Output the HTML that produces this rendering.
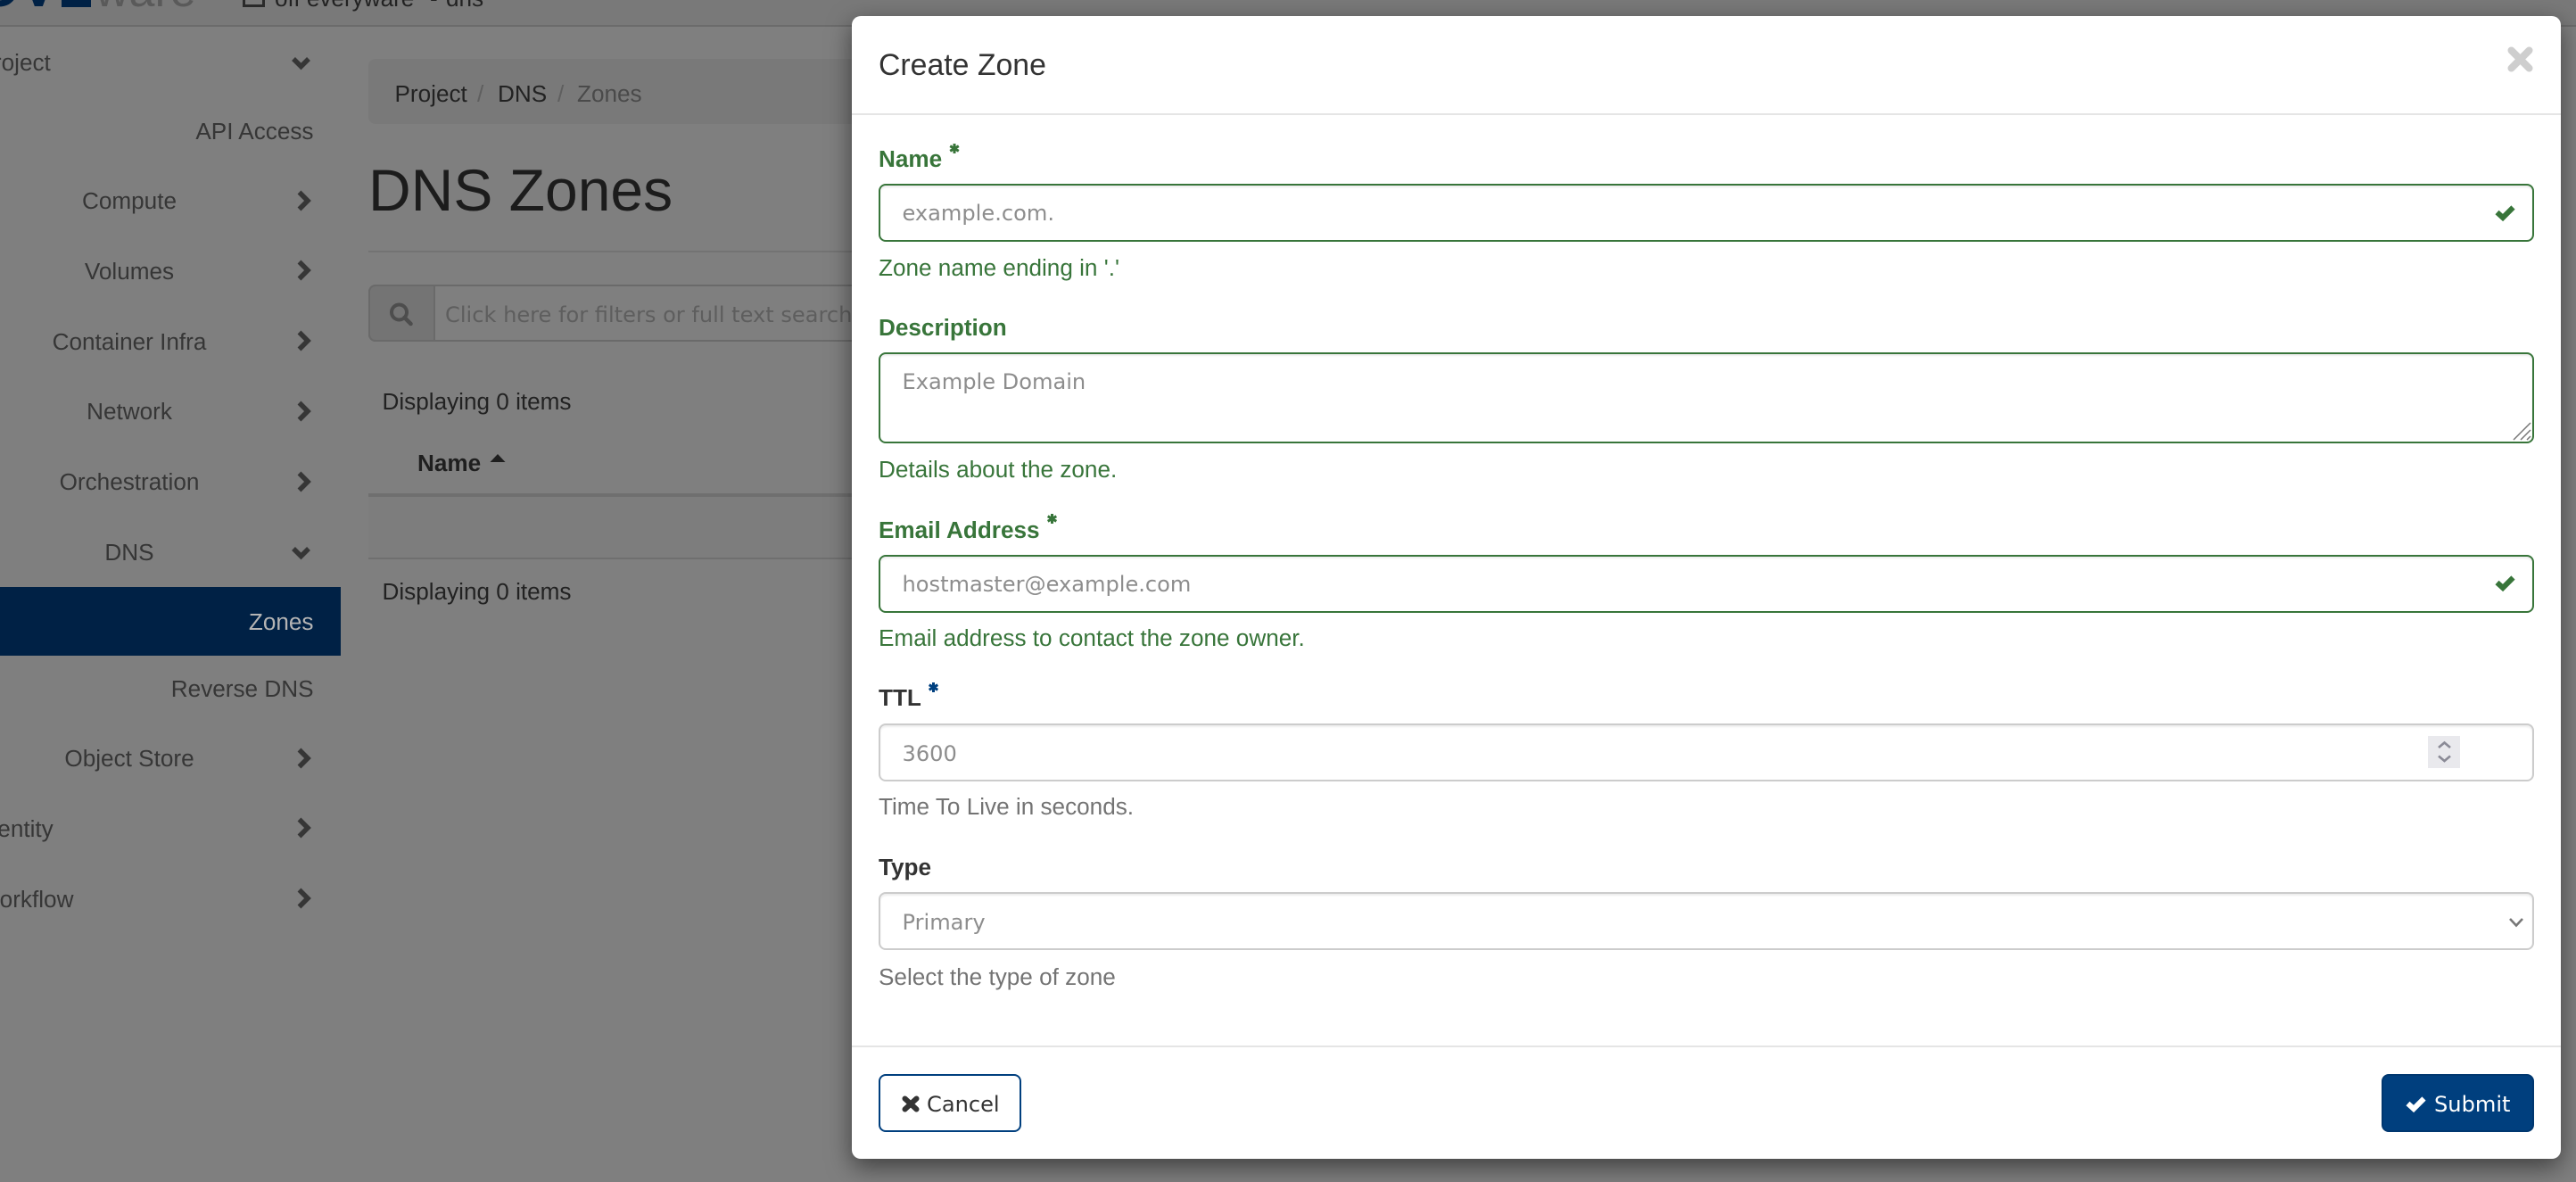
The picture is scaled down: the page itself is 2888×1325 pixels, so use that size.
<!DOCTYPE html>
<html><head><meta charset="utf-8"><title>DNS Zones</title>
<style>
html,body{margin:0;padding:0;width:2888px;height:1325px;overflow:hidden;background:#7f7f7f}
body{position:relative;font-family:"Liberation Sans",sans-serif;font-size:26.13px;color:#333}
.t{position:absolute;white-space:nowrap;line-height:1}
.b{position:absolute;box-sizing:border-box}
.side{color:#363636;transform:translateX(-50%);left:145px}
.sl{color:#363636;left:-24.5px}
.rt{color:#363636;right:2536.5px}
.o{font-family:"DejaVu Sans",sans-serif;font-size:24.1px}
.ph{color:#8d8d8d}
.lb{font-weight:bold}
.g{color:#38753a}
.h{color:#737373}
.in{left:985px;width:1856px;height:65px;border:2px solid #ccc;border-radius:8px;box-shadow:inset 0 2px 2px rgba(0,0,0,.075);background:#fff}
.ok{border-color:#38753a}
#modal{left:955px;top:18px;width:1916px;height:1281px;background:#fff;border-radius:10px;box-shadow:0 9px 27px rgba(0,0,0,.5)}
svg{position:absolute;left:0;top:0;z-index:5}
</style></head><body>

<div class="b" style="left:0;top:0;width:2888px;height:30px;background:#797979;border-bottom:2px solid #6b6b6b"></div>
<div class="t" style="right:2824px;top:-44.5px;font-size:62px;font-weight:bold;color:#002145">NOV</div>
<div class="b" style="left:69px;top:0;width:33px;height:8px;background:#002145"></div>
<div class="t" style="left:107px;top:-36px;font-size:52px;color:#5a5a5a">ware</div>
<div class="b" style="left:272px;top:-10px;width:25px;height:18px;border:3px solid #2a2a2a"></div>
<div class="t" style="left:308px;top:-15px;color:#222">off everyware</div>
<div class="t" style="left:482px;top:-15px;color:#222">-</div>
<div class="t" style="left:500px;top:-15px;color:#222">dns</div>

<div class="t sl" style="top:57px">Project</div>
<div class="t rt" style="top:134px">API Access</div>
<div class="t side" style="top:212px">Compute</div>
<div class="t side" style="top:291px">Volumes</div>
<div class="t side" style="top:370px">Container Infra</div>
<div class="t side" style="top:448px">Network</div>
<div class="t side" style="top:527px">Orchestration</div>
<div class="t side" style="top:606px">DNS</div>
<div class="b" style="left:0;top:658px;width:382px;height:77px;background:#002145"></div>
<div class="t rt" style="top:684px;color:#b4b4b4">Zones</div>
<div class="t rt" style="top:759px">Reverse DNS</div>
<div class="t side" style="top:837px">Object Store</div>
<div class="t sl" style="top:916px">Identity</div>
<div class="t sl" style="top:995px">Workflow</div>

<div class="b" style="left:413px;top:66px;width:560px;height:73px;background:#797979;border-radius:8px"></div>
<div class="t" style="left:442.500px;top:92px;color:#222">Project</div>
<div class="t" style="left:535px;top:92px;color:#5f5f5f">/</div>
<div class="t" style="left:558px;top:92px;color:#222">DNS</div>
<div class="t" style="left:625px;top:92px;color:#5f5f5f">/</div>
<div class="t" style="left:647px;top:92px;color:#4a4a4a">Zones</div>
<div class="t" style="left:413px;top:180px;font-size:66px;color:#1c1c1c">DNS Zones</div>
<div class="b" style="left:413px;top:281px;width:560px;height:2px;background:#737373"></div>

<div class="b" style="left:413px;top:319px;width:560px;height:64px;border:2px solid #6a6a6a;border-radius:8px;background:#7f7f7f"></div>
<div class="b" style="left:413px;top:319px;width:75px;height:64px;border:2px solid #6a6a6a;border-radius:8px 0 0 8px;background:#747474"></div>
<div class="t o" style="left:499px;top:340.500px;color:#5e5e5e">Click here for filters or full text search</div>

<div class="t" style="left:428.500px;top:437px;color:#222">Displaying 0 items</div>
<div class="t lb" style="left:468px;top:506px;color:#1f1f1f">Name</div>
<div class="b" style="left:413px;top:553px;width:560px;height:4px;background:#6f6f6f"></div>
<div class="b" style="left:413px;top:557px;width:560px;height:68px;background:#7d7d7d"></div>
<div class="b" style="left:413px;top:625px;width:560px;height:2px;background:#6f6f6f"></div>
<div class="t" style="left:428.500px;top:650px;color:#222">Displaying 0 items</div>

<div class="b" id="modal"></div>
<div class="t" style="left:985px;top:56.500px;font-size:33.800px;color:#333;z-index:2">Create Zone</div>
<div class="b" style="left:955px;top:127px;width:1916px;height:2px;background:#e5e5e5;z-index:2"></div>

<div style="position:relative;z-index:2">
<div class="t lb g" style="left:985px;top:165px">Name</div>
<div class="b in ok" style="top:206px"></div>
<div class="t o ph" style="left:1011.500px;top:226.500px">example.com.</div>
<div class="t g" style="left:985px;top:287px">Zone name ending in '.'</div>

<div class="t lb g" style="left:985px;top:354px">Description</div>
<div class="b in ok" style="top:395px;height:102px"></div>
<div class="t o ph" style="left:1011.500px;top:416px">Example Domain</div>
<div class="t g" style="left:985px;top:513px">Details about the zone.</div>

<div class="t lb g" style="left:985px;top:581px">Email Address</div>
<div class="b in ok" style="top:622px"></div>
<div class="t o ph" style="left:1011.500px;top:643px">hostmaster@example.com</div>
<div class="t g" style="left:985px;top:702px">Email address to contact the zone owner.</div>

<div class="t lb" style="left:985px;top:769px">TTL</div>
<div class="b in" style="top:811px"></div>
<div class="t o ph" style="left:1011.500px;top:833px">3600</div>
<div class="b" style="left:2722px;top:825px;width:36px;height:36px;background:#e9e9ed"></div>
<div class="t h" style="left:985px;top:891px">Time To Live in seconds.</div>

<div class="t lb" style="left:985px;top:959px">Type</div>
<div class="b in" style="top:1000px"></div>
<div class="t o ph" style="left:1011.500px;top:1022px">Primary</div>
<div class="t h" style="left:985px;top:1082px">Select the type of zone</div>

<div class="b" style="left:955px;top:1172px;width:1916px;height:2px;background:#e5e5e5"></div>
<div class="b" style="left:985px;top:1204px;width:160px;height:65px;border:2px solid #003f7e;border-radius:8px;background:#fff"></div>
<div class="t o" style="left:1039px;top:1225.500px;color:#333">Cancel</div>
<div class="b" style="left:2670px;top:1204px;width:171px;height:65px;border:2px solid #00376f;border-radius:8px;background:#003f7e"></div>
<div class="t o" style="left:2729px;top:1225.500px;color:#fff">Submit</div>
</div>

<svg width="2888" height="1325" viewBox="0 0 2888 1325" fill="none">
  <g stroke="#363636" stroke-width="5.500">
    <path d="M329 66l8.500 8.500 8.500-8.500"/>
    <path d="M329 615l8.500 8.500 8.500-8.500"/>
    <path d="M335.500 215.500l9.500 9.500-9.500 9.500"/>
    <path d="M335.500 293.500l9.500 9.500-9.500 9.500"/>
    <path d="M335.500 372.500l9.500 9.500-9.500 9.500"/>
    <path d="M335.500 451.500l9.500 9.500-9.500 9.500"/>
    <path d="M335.500 530.500l9.500 9.500-9.500 9.500"/>
    <path d="M335.500 840.500l9.500 9.500-9.500 9.500"/>
    <path d="M335.500 918.500l9.500 9.500-9.500 9.500"/>
    <path d="M335.500 997.500l9.500 9.500-9.500 9.500"/>
  </g>
  <circle cx="447.500" cy="350" r="8.500" stroke="#4d4d4d" stroke-width="4"/>
  <path d="M453.500 356l7 7" stroke="#4d4d4d" stroke-width="4.500" stroke-linecap="round"/>
  <path d="M549.500 518l8.500-9 8.500 9z" fill="#1f1f1f"/>
  <path d="M2815.500 56.500l20 20M2835.500 56.500l-20 20" stroke="#cecece" stroke-width="8" stroke-linecap="round"/>
  <g stroke="#38753a" stroke-width="6">
    <path d="M2799.500 238l6.500 6 11.500-11.500"/>
    <path d="M2799.500 653l6.500 6 11.500-11.500"/>
  </g>
  <g stroke-width="3" stroke="#38753a">
    <path d="M1070 161v11M1065.200 163.700l9.600 5.600M1074.800 163.700l-9.600 5.600"/>
    <path d="M1179.500 576v11M1174.700 578.700l9.600 5.600M1184.300 578.700l-9.600 5.600"/>
  </g>
  <path stroke="#004080" stroke-width="3" d="M1046.500 765v11M1041.700 767.700l9.600 5.600M1051.300 767.700l-9.600 5.600"/>
  <path d="M2818 493l19-19M2826 493l11-11M2833 493l4-4" stroke="#777" stroke-width="1.500"/>
  <path d="M2734 838l6.500-5.500 6.500 5.500M2734 847.500l6.500 5.500 6.500-5.500" stroke="#8a8a96" stroke-width="2.600"/>
  <path d="M2814 1030l7 7.500 7-7.500" stroke="#777" stroke-width="2.600"/>
  <path d="M1014.500 1231.500l13 12M1027.500 1231.500l-13 12" stroke="#333" stroke-width="6" stroke-linecap="round"/>
  <path d="M2699.500 1237l6.500 6 11.500-11.500" stroke="#fff" stroke-width="6"/>
</svg>
</body></html>
